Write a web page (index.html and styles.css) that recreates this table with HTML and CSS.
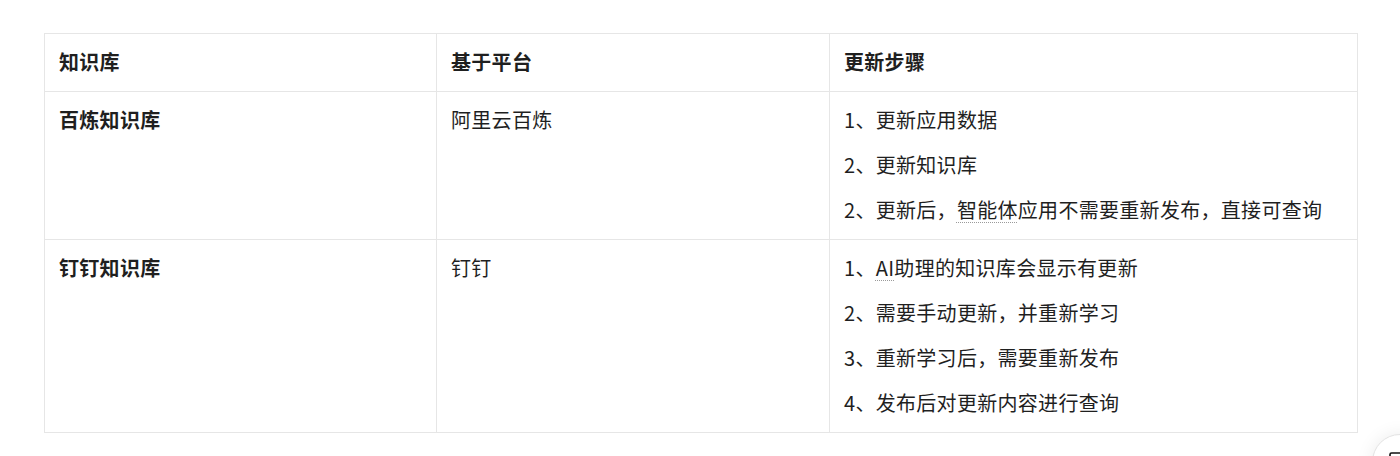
FILE: index.html
```html
<!DOCTYPE html>
<html lang="zh-CN">
<head>
<meta charset="utf-8">
<title>知识库更新</title>
<link rel="stylesheet" href="styles.css">
</head>
<body>
<div class="page">
  <table class="kb-table">
    <colgroup>
      <col class="c1"><col class="c2"><col class="c3">
    </colgroup>
    <thead>
      <tr><th>知识库</th><th>基于平台</th><th>更新步骤</th></tr>
    </thead>
    <tbody>
      <tr>
        <td class="name">百炼知识库</td>
        <td><p>阿里云百炼</p></td>
        <td>
          <p>1、更新应用数据</p>
          <p>2、更新知识库</p>
          <p>2、更新后，<span class="term">智能体</span>应用不需要重新发布，直接可查询</p>
        </td>
      </tr>
      <tr>
        <td class="name">钉钉知识库</td>
        <td><p>钉钉</p></td>
        <td>
          <p>1、<span class="term">AI</span>助理的知识库会显示有更新</p>
          <p>2、需要手动更新，并重新学习</p>
          <p>3、重新学习后，需要重新发布</p>
          <p>4、发布后对更新内容进行查询</p>
        </td>
      </tr>
    </tbody>
  </table>
</div>
<div class="fab">
  <svg class="fab-icon" width="20" height="20" viewBox="0 0 20 20"><rect x="1" y="1" width="16" height="16" rx="1.5" fill="none" stroke="#111" stroke-width="1.6"/></svg>
</div>
</body>
</html>
```
FILE: styles.css
```css
html, body {
  margin: 0;
  padding: 0;
  background: #ffffff;
  overflow: hidden;
}
body {
  font-family: "Noto Sans CJK SC", "Noto Sans", sans-serif;
  color: #1f1f1f;
}
.page {
  padding: 33px 43px 0 44px;
}
.kb-table {
  border-collapse: collapse;
  width: 1313px;
  table-layout: fixed;
  font-size: 20px;
  line-height: 30px;
  letter-spacing: 0.3px;
}
.c1 { width: 392px; }
.c2 { width: 393px; }
.c3 { width: 528px; }
.kb-table th,
.kb-table td {
  border: 1px solid #e6e6e6;
  padding: 13px 14px 14px 14px;
  text-align: left;
  vertical-align: top;
}
.kb-table th {
  font-weight: 700;
}
.kb-table td.name {
  font-weight: 700;
}
.kb-table p {
  margin: 0 0 15px 0;
}
.kb-table p:last-child {
  margin-bottom: 0;
}
.term {
  text-decoration: underline dotted #9a9a9a;
  text-underline-offset: 4px;
  text-decoration-thickness: 1px;
}
.fab {
  position: fixed;
  left: 1372px;
  top: 434px;
  width: 56px;
  height: 56px;
  box-sizing: border-box;
  border-radius: 50%;
  border: 1px solid #e2e2e2;
  background: #fff;
  box-shadow: 0 0 18px rgba(0,0,0,0.08);
}
.fab-icon {
  position: absolute;
  left: 16px;
  top: 17px;
}
```
